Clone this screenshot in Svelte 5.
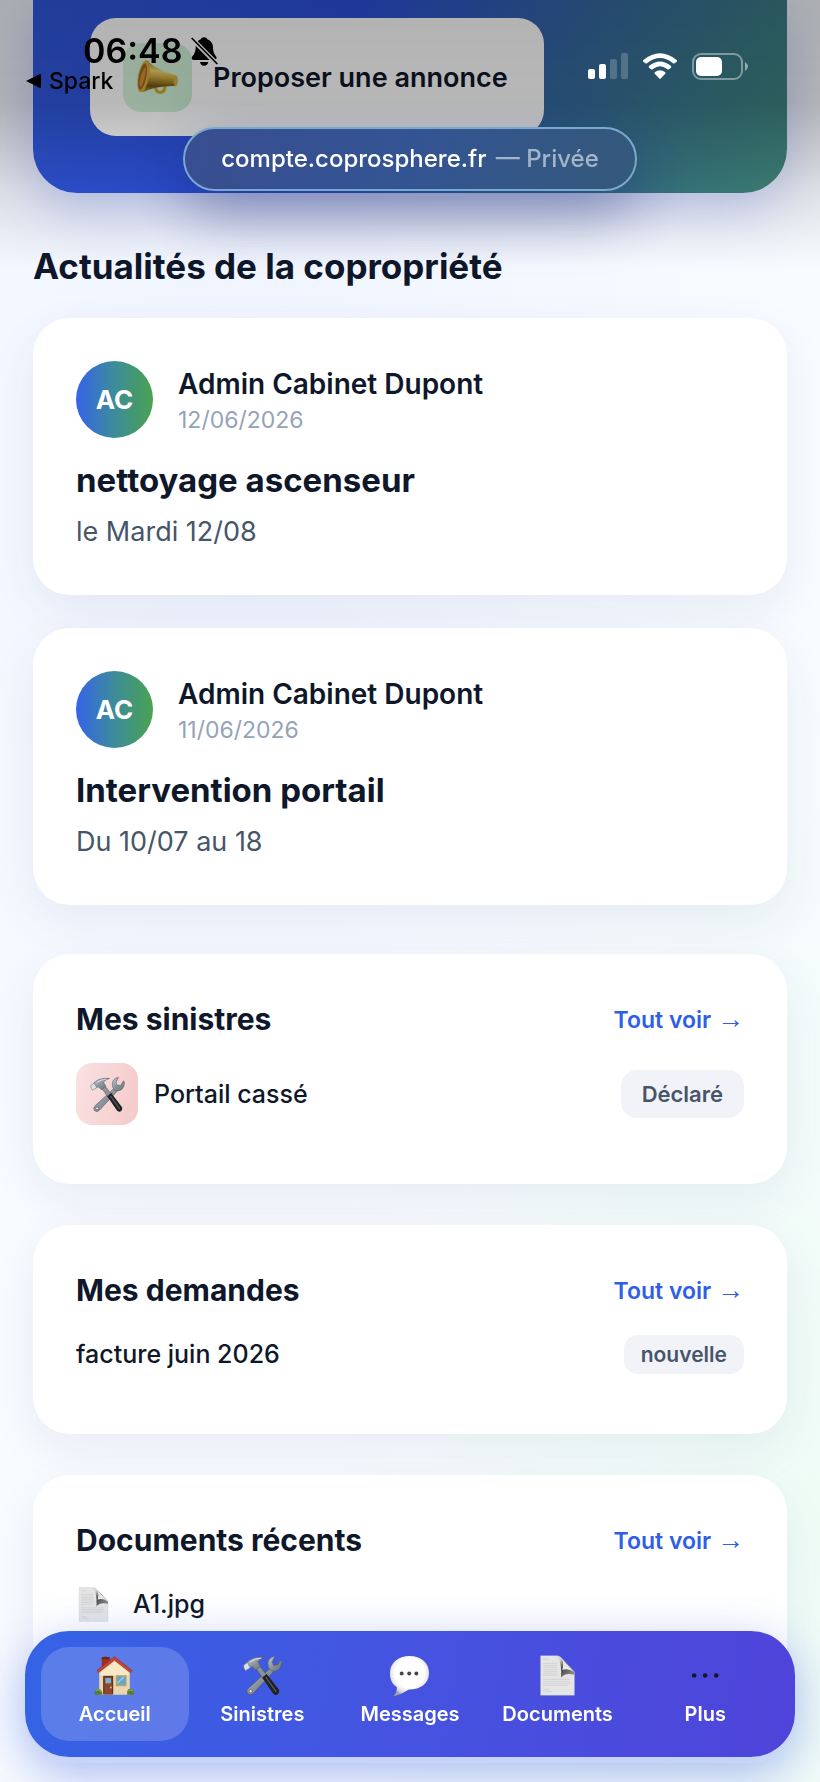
<script>
  const posts = [
    { author: 'Admin Cabinet Dupont', initials: 'AC', date: '12/06/2026', title: 'nettoyage ascenseur', body: 'le Mardi 12/08' },
    { author: 'Admin Cabinet Dupont', initials: 'AC', date: '11/06/2026', title: 'Intervention portail', body: 'Du 10/07 au 18' }
  ];

  const tabs = [
    { id: 'home', label: 'Accueil' },
    { id: 'tools', label: 'Sinistres' },
    { id: 'chat', label: 'Messages' },
    { id: 'page', label: 'Documents' },
    { id: 'more', label: 'Plus' }
  ];

  let active = $state('home');
</script>

{#snippet tools()}
  <svg viewBox="0 0 124 128" aria-hidden="true">
    <path d="M92 36 L102 46 L34 119 Q25 129 16 121 Q9 112 18 104 Z" fill="url(#steel)" stroke="#4d535b" stroke-width="2" />
    <circle cx="25" cy="113" r="5" fill="#e6e9ec" stroke="#4d535b" stroke-width="2" />
    <path d="M101 3 Q80 7 79 26 Q79 50 99 51 Q120 49 122 23 L119 15 L109 31 L97 32 L92 22 Z" fill="url(#steel)" stroke="#555c66" stroke-width="2" />
    <path d="M42 43 L53 34 L80 68 L66 76 Z" fill="#8b939d" stroke="#50565f" stroke-width="2" />
    <path d="M61 70 L75 59 L113 108 Q117 118 108 124 Q101 127 95 120 Z" fill="#202224" />
    <path d="M72 69 L105 115" stroke="#565a5e" stroke-width="4" />
    <path d="M12 25 Q29 4 69 7 Q53 11 48 21 L56 35 L40 47 L31 37 L20 39 Z" fill="url(#steel)" stroke="#555c66" stroke-width="2" />
    <path d="M3 32 L15 23 L24 40 L9 49 Q2 42 3 32 Z" fill="#dce3e8" stroke="#69717a" stroke-width="2" />
    <path d="M24 21 Q39 10 58 10" fill="none" stroke="#e4e9ee" stroke-width="3" />
  </svg>
{/snippet}

{#snippet page()}
  <svg viewBox="0 0 124 126" aria-hidden="true">
    <path d="M10 2 H61 Q70 3 77 12 L114 52 V124 H10 Z" fill="#e5e5e5" stroke="#c2c2c2" stroke-width="1" />
    <path d="M18 13 h18 M18 26 h43 M18 32 h43 M18 38 h44 M18 44 h44 M18 50 h44 M18 56 h43 M18 62 h45 M18 75 h83 M18 81 h80 M18 87 h84 M18 93 h76 M18 106 h18 M18 112 h27" stroke="#cbcbcb" stroke-width="2" />
    <path d="M58 2 Q75 15 73 69 Q87 53 114 61 V52 L77 12 Q68 2 58 2 Z" fill="url(#curl)" />
    <path d="M76 12 Q82 27 77 46 Q93 39 113 52 Z" fill="#e8e8e8" />
  </svg>
{/snippet}

{#snippet home()}
  <svg viewBox="0 0 124 126" aria-hidden="true">
    <path d="M23 7 Q34 3 47 7 V33 L23 49 Z" fill="#9e3023" />
    <path d="M23 7 Q34 3 47 7 V14 H23 Z" fill="#73251b" />
    <path d="M15 51 L62 12 L109 51 V122 H15 Z" fill="#ead6ac" />
    <path d="M19 54 L62 21 L105 54 V64 H19 Z" fill="#f8e8c5" />
    <path d="M8 48 L62 5 L116 48 L111 54 L62 16 L13 54 Z" fill="#c94335" stroke="#8e2c23" stroke-width="2" />
    <path d="M27 64 H58 V121 H27 Z" fill="#633020" />
    <path d="M31 68 H54 V121 H31 Z" fill="#8b4930" />
    <path d="M34 71 H51 V87 H34 Z" fill="#77b6d2" />
    <circle cx="51" cy="100" r="3" fill="#e1bc6a" />
    <path d="M66 62 H99 V96 H66 Z" fill="#bba170" />
    <path d="M70 66 H96 V91 H70 Z" fill="#61a6cb" />
    <path d="M71 84 L88 67 H94 L71 89 Z" fill="#a5d2e4" />
    <path d="M2 122 Q-1 106 10 105 Q23 101 25 122 Z M101 122 Q99 104 111 104 Q124 105 122 122 Z" fill="#587c2c" />
    <path d="M5 109 Q14 103 20 112 M105 111 Q112 105 118 111" fill="none" stroke="#8aab44" stroke-width="4" />
  </svg>
{/snippet}

{#snippet chat()}
  <svg viewBox="0 0 124 126" aria-hidden="true">
    <path d="M62 3 C98 3 122 24 122 55 C122 87 96 106 61 106 C49 111 36 123 13 126 Q25 113 23 98 C8 89 2 74 2 55 C2 24 27 3 62 3 Z" fill="url(#bubble)" />
    <circle cx="38" cy="57" r="6" fill="#444" />
    <circle cx="61" cy="57" r="6" fill="#444" />
    <circle cx="83" cy="57" r="6" fill="#444" />
  </svg>
{/snippet}

{#snippet more()}
  <svg viewBox="0 0 124 126" aria-hidden="true">
    <circle cx="27" cy="63" r="7" fill="#111827" />
    <circle cx="61" cy="63" r="7" fill="#111827" />
    <circle cx="95" cy="63" r="7" fill="#111827" />
  </svg>
{/snippet}

<svg class="defs" width="0" height="0" aria-hidden="true">
  <defs>
    <linearGradient id="steel" x1="0" y1="0" x2="1" y2="1">
      <stop offset="0" stop-color="#c8d0d7" />
      <stop offset="0.5" stop-color="#8a929b" />
      <stop offset="1" stop-color="#686f77" />
    </linearGradient>
    <linearGradient id="curl" x1="0" y1="0" x2="1" y2="1">
      <stop offset="0.2" stop-color="#d5d5d5" />
      <stop offset="0.45" stop-color="#4a4a4a" />
      <stop offset="1" stop-color="#9c9c9c" />
    </linearGradient>
    <radialGradient id="bubble" cx="0.5" cy="0.42" r="0.58">
      <stop offset="0.65" stop-color="#fff" />
      <stop offset="0.88" stop-color="#dedede" />
      <stop offset="1" stop-color="#a5a5a5" />
    </radialGradient>
    <linearGradient id="brass" x1="0.1" y1="0" x2="0" y2="1">
      <stop offset="0" stop-color="#a5821f" />
      <stop offset="0.3" stop-color="#ecd873" />
      <stop offset="0.5" stop-color="#c9a53a" />
      <stop offset="0.78" stop-color="#6f5313" />
      <stop offset="1" stop-color="#c4a238" />
    </linearGradient>
  </defs>
</svg>

<div class="status">
  <div class="clock">
    <div class="time">
      <span>06:48</span>
      <svg class="bell" viewBox="0 0 81 87" aria-label="Silencieux">
        <path d="M39 1 Q47 1 49 7 Q65 12 66 32 Q66 47 76 59 Q79 68 70 69 H8 Q-1 68 4 58 Q14 47 14 32 Q14 12 29 7 Q32 1 39 1 Z M27 75 H52 Q50 86 39 86 Q29 86 27 75 Z" />
        <path d="M0 2 L79 82" stroke="#b5b6ba" stroke-width="14" />
        <path d="M2 3 L79 81" stroke="#000" stroke-width="5" />
      </svg>
    </div>
    <div class="back">
      <svg viewBox="0 0 15 14" aria-hidden="true"><path d="M0 7 L14 0 Q15 0 15 1 V13 Q15 14 14 14 Z" /></svg>
      <span>Spark</span>
    </div>
  </div>
  <div class="signals">
    <svg class="bars" viewBox="0 0 40 26" aria-hidden="true">
      <rect y="16" width="7" height="10" rx="2" />
      <rect x="11" y="11" width="7" height="15" rx="2" />
      <rect x="22" y="6" width="7" height="20" rx="2" opacity="0.2" />
      <rect x="33" width="7" height="26" rx="2" opacity="0.2" />
    </svg>
    <svg class="wifi" viewBox="0 0 102 78" aria-hidden="true">
      <path d="M1 21 Q51 -20 101 21 Q103 24 101 26 L95 31 Q92 33 89 30 Q51 0 13 30 Q10 33 7 31 L1 26 Q-1 24 1 21 Z" />
      <path d="M18 39 Q51 12 84 39 Q86 42 84 44 L78 49 Q75 51 72 48 Q51 32 30 48 Q27 51 24 49 L18 44 Q16 42 18 39 Z" />
      <path d="M36 57 Q51 46 66 57 Q69 60 66 63 L54 76 Q51 79 48 76 L36 63 Q33 60 36 57 Z" />
    </svg>
    <svg class="battery" viewBox="0 0 56 27" aria-hidden="true">
      <rect x="1" y="1" width="49" height="25" rx="8" fill="none" stroke="#fff" stroke-width="2" opacity="0.4" />
      <rect x="4" y="4" width="26" height="19" rx="5" />
      <path d="M53 9 Q59 13 53 18 Z" opacity="0.5" />
    </svg>
  </div>
  <div class="address">compte.coprosphere.fr <span>— Privée</span></div>
</div>

<main>
  <header class="hero">
    <button type="button" class="propose">
      <span class="propose-icon">
        <svg viewBox="0 0 124 106" aria-hidden="true">
          <path d="M52 75 Q49 101 70 103 Q91 101 89 78 L80 76 Q80 93 70 94 Q60 93 61 76 Z" fill="#cfa932" />
          <path d="M31 1 Q52 28 119 47 Q128 65 117 79 Q60 77 18 98 Z" fill="url(#brass)" />
          <ellipse cx="20" cy="49" rx="17" ry="49" transform="rotate(11 20 49)" fill="#d9a93e" />
          <ellipse cx="17" cy="50" rx="11" ry="40" transform="rotate(11 17 50)" fill="#9a6a22" />
          <path d="M7 72 Q11 38 27 20 Q27 53 12 83 Z" fill="#d88f3a" />
          <ellipse cx="117" cy="63" rx="6" ry="17" fill="#d3af42" />
        </svg>
      </span>
      Proposer une annonce
    </button>
  </header>

  <h1>Actualités de la copropriété</h1>

  <div class="posts">
    {#each posts as post}
      <article class="card">
        <div class="author">
          <div class="avatar">{post.initials}</div>
          <div>
            <div class="name">{post.author}</div>
            <div class="date">{post.date}</div>
          </div>
        </div>
        <h2>{post.title}</h2>
        <p>{post.body}</p>
      </article>
    {/each}
  </div>

  <div class="panels">
    <section class="card">
      <div class="panel-head">
        <h3>Mes sinistres</h3>
        <a href="#sinistres">Tout voir <span class="arrow">→</span></a>
      </div>
      <div class="item">
        <span class="item-icon">{@render tools()}</span>
        <span>Portail cassé</span>
        <span class="badge large">Déclaré</span>
      </div>
    </section>

    <section class="card">
      <div class="panel-head">
        <h3>Mes demandes</h3>
        <a href="#demandes">Tout voir <span class="arrow">→</span></a>
      </div>
      <div class="item">
        <span>facture juin 2026</span>
        <span class="badge">nouvelle</span>
      </div>
    </section>

    <section class="card">
      <div class="panel-head">
        <h3>Documents récents</h3>
        <a href="#documents">Tout voir <span class="arrow">→</span></a>
      </div>
      <div class="item file">
        <span class="file-icon">{@render page()}</span>
        <span>A1.jpg</span>
      </div>
    </section>
  </div>
</main>

<nav>
  {#each tabs as tab}
    <button type="button" class:active={active === tab.id} onclick={() => (active = tab.id)}>
      {#if tab.id === 'home'}{@render home()}
      {:else if tab.id === 'tools'}{@render tools()}
      {:else if tab.id === 'chat'}{@render chat()}
      {:else if tab.id === 'page'}{@render page()}
      {:else}{@render more()}{/if}
      <span>{tab.label}</span>
    </button>
  {/each}
</nav>

<style>
  :global(body) {
    margin: 0;
    font-family: Inter, 'Liberation Sans', sans-serif;
    color: #0f172a;
    background: #f8fbff;
  }

  * {
    box-sizing: border-box;
  }

  svg {
    display: block;
  }

  button {
    border: none;
    font-family: inherit;
    color: inherit;
    cursor: pointer;
  }

  h1,
  h2,
  h3,
  p {
    margin: 0;
  }

  .defs {
    position: absolute;
  }

  main {
    min-height: 100vh;
    padding: 0 33px 99px;
    background:
      radial-gradient(ellipse 60% 50% at 100% 85%, #effcf6 0%, rgba(239, 252, 246, 0) 100%),
      radial-gradient(ellipse 70% 50% at 30% 25%, #f0f4ff 0%, rgba(240, 244, 255, 0) 100%),
      #f8fbff;
  }

  /* status bar */
  .status {
    position: fixed;
    z-index: 3;
    inset: 0 0 auto;
    height: 270px;
    padding: 33px 72px 0 26px;
    display: grid;
    grid-template-columns: 1fr auto;
    grid-template-rows: 94px 64px;
    pointer-events: none;
    background: linear-gradient(rgba(0, 0, 0, 0.3) 0%, rgba(0, 0, 0, 0.28) 38%, rgba(0, 0, 0, 0.1) 70%, rgba(0, 0, 0, 0) 100%);
  }

  .time {
    display: flex;
    align-items: center;
    gap: 9px;
    padding-left: 57px;
    color: #000;
    font-size: 34px;
    line-height: 36px;
    font-weight: 600;
  }

  .bell {
    width: 27px;
    height: 29px;
  }

  .back {
    display: flex;
    align-items: center;
    gap: 8px;
    color: #000;
    font-size: 23px;
    line-height: 24px;
    font-weight: 500;
  }

  .back svg {
    width: 15px;
    height: 14px;
  }

  .signals {
    display: flex;
    align-items: flex-start;
    gap: 15px;
    padding-top: 20px;
    fill: #fff;
  }

  .bars {
    width: 40px;
    height: 26px;
  }

  .wifi {
    width: 34px;
    height: 26px;
  }

  .battery {
    width: 56px;
    height: 27px;
  }

  .address {
    grid-column: 1 / -1;
    justify-self: center;
    margin-left: 46px;
    padding: 0 36px;
    border: 2px solid #79a9cc;
    border-radius: 32px;
    color: #fff;
    font-size: 24px;
    line-height: 60px;
    font-weight: 500;
    white-space: nowrap;
    background: linear-gradient(100deg, #384e91 0%, #335493 50%, #34597a 100%);
    box-shadow: 0 20px 60px rgba(20, 35, 110, 0.4);
  }

  .address span {
    margin-left: 3px;
    color: #a3b4ca;
  }

  /* hero */
  .hero {
    padding: 18px 57px 57px;
    border-radius: 0 0 44px 44px;
    background: linear-gradient(120deg, #3259dc 0%, #2c50da 38%, #35699f 66%, #3b7c86 86%, #41887a 100%);
    box-shadow: 0 16px 50px rgba(50, 80, 220, 0.25);
  }

  .propose {
    display: inline-flex;
    align-items: center;
    gap: 21px;
    padding: 25px 36px 24px 33px;
    border-radius: 26px;
    background: #fff;
    font-size: 27px;
    line-height: 36px;
    font-weight: 600;
    vertical-align: top;
  }

  .propose-icon {
    display: grid;
    place-items: center;
    width: 69px;
    height: 69px;
    border-radius: 18px;
    background: linear-gradient(110deg, #daf5df, #cbefd3);
  }

  .propose-icon svg {
    width: 41px;
    height: 35px;
  }

  h1 {
    margin: 51px 0 30px;
    font-size: 35px;
    line-height: 44px;
    font-weight: 700;
  }

  .posts {
    display: grid;
    gap: 33px;
  }

  .panels {
    display: grid;
    gap: 41px;
    margin-top: 49px;
  }

  .card {
    padding: 43px;
    border-radius: 37px;
    background: #fff;
    box-shadow: 0 16px 48px rgba(30, 50, 110, 0.07);
  }

  .author {
    display: flex;
    align-items: center;
    gap: 25px;
  }

  .avatar {
    display: grid;
    place-items: center;
    width: 77px;
    height: 77px;
    border-radius: 50%;
    color: #fff;
    font-size: 26px;
    font-weight: 700;
    background: linear-gradient(90deg, #3563e9, #3d8c9a 50%, #49a34f);
  }

  .name {
    font-size: 28px;
    line-height: 40px;
    font-weight: 600;
  }

  .date {
    color: #94a3b8;
    font-size: 23px;
    line-height: 32px;
  }

  h2 {
    margin: 22px 0 11px;
    font-size: 33px;
    line-height: 40px;
    font-weight: 700;
  }

  p {
    color: #475569;
    font-size: 27px;
    line-height: 41px;
  }

  .panel-head {
    display: flex;
    align-items: center;
    justify-content: space-between;
    margin-bottom: 6px;
  }

  h3 {
    font-size: 30px;
    line-height: 44px;
    font-weight: 700;
  }

  a {
    color: #2f5fe8;
    font-size: 23px;
    line-height: 30px;
    font-weight: 600;
    text-decoration: none;
  }

  .arrow {
    font-family: 'Liberation Serif', serif;
    font-size: 27px;
    font-weight: 400;
  }

  .item {
    display: flex;
    align-items: center;
    gap: 16px;
    padding: 16px 0;
    font-size: 25px;
    line-height: 41px;
    font-weight: 500;
  }

  .item-icon {
    display: grid;
    place-items: center;
    width: 62px;
    height: 62px;
    border-radius: 16px;
    background: linear-gradient(100deg, #fae2e2, #f5c9c9);
  }

  .item-icon svg {
    width: 35px;
    height: 37px;
  }

  .file-icon svg {
    width: 35px;
    height: 35px;
  }

  .file {
    gap: 22px;
  }

  .badge {
    margin-left: auto;
    padding: 0 17px;
    border-radius: 14px;
    color: #475569;
    background: #f1f3f9;
    font-size: 21px;
    line-height: 39px;
    font-weight: 600;
  }

  .badge.large {
    padding: 0 21px;
    border-radius: 16px;
    font-size: 22px;
    line-height: 48px;
  }

  /* bottom tabs */
  nav {
    position: fixed;
    z-index: 2;
    right: 25px;
    bottom: 25px;
    left: 25px;
    display: grid;
    grid-template-columns: repeat(5, 1fr);
    padding: 16px;
    border-radius: 44px;
    background: linear-gradient(100deg, #3563e5 0%, #4553e0 50%, #4f43da 100%);
    box-shadow:
      0 6px 0 rgba(205, 215, 255, 0.6),
      0 16px 50px rgba(50, 90, 220, 0.42);
  }

  nav button {
    display: flex;
    flex-direction: column;
    align-items: center;
    gap: 8px;
    padding: 8px 0 17px;
    border-radius: 28px;
    background: none;
    color: #fff;
    font-size: 20px;
    line-height: 20px;
    font-weight: 600;
  }

  nav button.active {
    background: rgba(255, 255, 255, 0.18);
  }

  nav svg {
    width: 41px;
    height: 41px;
  }
</style>
